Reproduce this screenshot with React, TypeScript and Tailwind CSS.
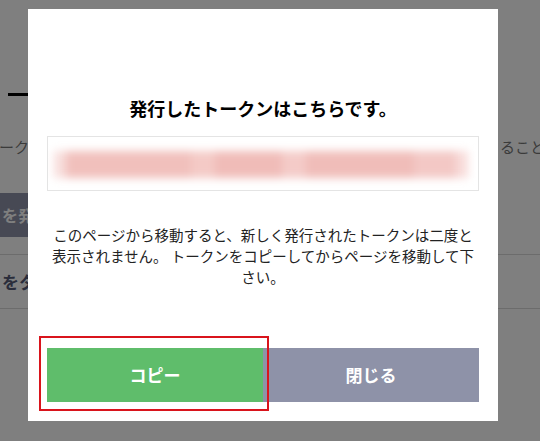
const jp = { fontFamily: '"Noto Sans CJK JP", "Noto Sans", sans-serif' }

export default function App() {
  return (
    <div className="relative w-[540px] h-[441px] overflow-hidden bg-white" style={jp}>
      {/* PAGE UNDERNEATH */}
      <div className="flex flex-col pt-[93px]">
        <div className="ml-[8px] h-[3px] w-[40px] bg-black" />
        <div className="mt-[40px] flex justify-between text-[15px] leading-[22px] text-[#777]">
          <span className="-ml-[1px]">ークンを発行すると外部サービスから利用す</span>
          <span className="mr-[-5px]">ること</span>
        </div>
        <div className="mt-[35px] flex h-[44px] w-[200px] items-center bg-[#8e92a8] pl-[2px] text-[16px] font-bold text-white">
          を発行する
        </div>
        <div className="mt-[17px] h-px bg-[#d8d8d8]" />
        <div className="flex h-[53px] items-center pl-[2px] text-[17px] font-bold text-[#545a76]">
          をタップ
        </div>
        <div className="h-px bg-[#d8d8d8]" />
      </div>

      {/* OVERLAY + DIALOG */}
      <div className="absolute inset-0 bg-black/50 pl-[28px] pt-[9px]">
        <div className="flex h-[412px] w-[470px] flex-col items-center bg-white px-[19px] pb-[19px] pt-[86px]">
          <h2 className="text-[18px] font-bold leading-[27px] text-black">発行したトークンはこちらです。</h2>
          <div className="relative mt-[14px] h-[55px] w-full overflow-hidden border border-[#e4e4e4]">
            <div className="absolute left-[6px] right-[10px] top-[14px] flex h-[27px] bg-[#f3c9c5] blur-[4px]">
              <div className="h-full w-[3%] bg-[#f8dedc]" />
              <div className="h-full w-[30%] bg-[#f1c0bc]" />
              <div className="h-full w-[6%] bg-[#f4cac6]" />
              <div className="h-full w-[16%] bg-[#f0bcb8]" />
              <div className="h-full w-[6%] bg-[#f4cbc8]" />
              <div className="h-full w-[26%] bg-[#f0bdb9]" />
              <div className="h-full w-[10%] bg-[#f3c8c5]" />
              <div className="h-full w-[3%] bg-[#f8dcda]" />
            </div>
          </div>
          <p className="mt-[33px] w-[428px] text-center text-[14.5px] leading-[21px] text-[#222]">
            このページから移動すると、新しく発行されたトークンは二度と表示されません。 トークンをコピーしてからページを移動して下さい。
          </p>
          <div className="mt-auto flex h-[54px] w-full">
            <button className="flex-1 bg-[#5fbd6b] text-[17px] font-bold text-white">コピー</button>
            <button className="flex-1 bg-[#8e92a8] text-[17px] font-bold text-white">閉じる</button>
          </div>
        </div>
      </div>

      {/* ANNOTATION */}
      <div className="absolute left-[39px] top-[336px] h-[75px] w-[230px] border-2 border-[#d9141c]" />
    </div>
  )
}
